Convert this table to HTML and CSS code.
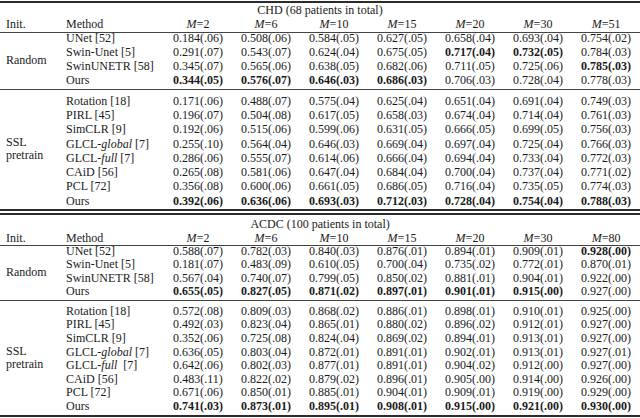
FILE: index.html
```html
<!DOCTYPE html>
<html>
<head>
<meta charset="utf-8">
<link rel="stylesheet" href="styles.css">
</head>
<body>
<table class="results chd">
<colgroup><col class="c-init"><col class="c-method"><col class="c-num"><col class="c-num"><col class="c-num"><col class="c-num"><col class="c-num"><col class="c-num"><col class="c-num"></colgroup>
<tbody>
<tr class="title"><td colspan="9">CHD (68 patients in total)</td></tr>
<tr class="head"><td class="init">Init.</td><td class="method">Method</td><td><i>M</i>=2</td><td><i>M</i>=6</td><td><i>M</i>=10</td><td><i>M</i>=15</td><td><i>M</i>=20</td><td><i>M</i>=30</td><td><i>M</i>=51</td></tr>
<tr class="first"><td class="init rnd" rowspan="4">Random</td><td class="method">UNet [52]</td><td>0.184(.06)</td><td>0.508(.06)</td><td>0.584(.05)</td><td>0.627(.05)</td><td>0.658(.04)</td><td>0.693(.04)</td><td>0.754(.02)</td></tr>
<tr><td class="method">Swin-Unet [5]</td><td>0.291(.07)</td><td>0.543(.07)</td><td>0.624(.04)</td><td>0.675(.05)</td><td class="b">0.717(.04)</td><td class="b">0.732(.05)</td><td>0.784(.03)</td></tr>
<tr><td class="method">SwinUNETR [58]</td><td>0.345(.07)</td><td>0.565(.06)</td><td>0.638(.05)</td><td>0.682(.06)</td><td>0.711(.05)</td><td>0.725(.06)</td><td class="b">0.785(.03)</td></tr>
<tr class="last"><td class="method">Ours</td><td class="b">0.344(.05)</td><td class="b">0.576(.07)</td><td class="b">0.646(.03)</td><td class="b">0.686(.03)</td><td>0.706(.03)</td><td>0.728(.04)</td><td>0.778(.03)</td></tr>
<tr class="gfirst"><td class="init ssl" rowspan="8">SSL<br>pretrain</td><td class="method">Rotation [18]</td><td>0.171(.06)</td><td>0.488(.07)</td><td>0.575(.04)</td><td>0.625(.04)</td><td>0.651(.04)</td><td>0.691(.04)</td><td>0.749(.03)</td></tr>
<tr><td class="method">PIRL [45]</td><td>0.196(.07)</td><td>0.504(.08)</td><td>0.617(.05)</td><td>0.658(.03)</td><td>0.674(.04)</td><td>0.714(.04)</td><td>0.761(.03)</td></tr>
<tr><td class="method">SimCLR [9]</td><td>0.192(.06)</td><td>0.515(.06)</td><td>0.599(.06)</td><td>0.631(.05)</td><td>0.666(.05)</td><td>0.699(.05)</td><td>0.756(.03)</td></tr>
<tr><td class="method">GLCL-<i>global</i> [7]</td><td>0.255(.10)</td><td>0.564(.04)</td><td>0.646(.03)</td><td>0.669(.04)</td><td>0.697(.04)</td><td>0.725(.04)</td><td>0.766(.03)</td></tr>
<tr><td class="method">GLCL-<i>full</i> [7]</td><td>0.286(.06)</td><td>0.555(.07)</td><td>0.614(.06)</td><td>0.666(.04)</td><td>0.694(.04)</td><td>0.733(.04)</td><td>0.772(.03)</td></tr>
<tr><td class="method">CAiD [56]</td><td>0.265(.08)</td><td>0.581(.06)</td><td>0.647(.04)</td><td>0.684(.04)</td><td>0.700(.04)</td><td>0.737(.04)</td><td>0.771(.02)</td></tr>
<tr><td class="method">PCL [72]</td><td>0.356(.08)</td><td>0.600(.06)</td><td>0.661(.05)</td><td>0.686(.05)</td><td>0.716(.04)</td><td>0.735(.05)</td><td>0.774(.03)</td></tr>
<tr class="end"><td class="method">Ours</td><td class="b">0.392(.06)</td><td class="b">0.636(.06)</td><td class="b">0.693(.03)</td><td class="b">0.712(.03)</td><td class="b">0.728(.04)</td><td class="b">0.754(.04)</td><td class="b">0.788(.03)</td></tr>
</tbody>
</table>
<table class="results acdc">
<colgroup><col class="c-init"><col class="c-method"><col class="c-num"><col class="c-num"><col class="c-num"><col class="c-num"><col class="c-num"><col class="c-num"><col class="c-num"></colgroup>
<tbody>
<tr class="title"><td colspan="9">ACDC (100 patients in total)</td></tr>
<tr class="head"><td class="init">Init.</td><td class="method">Method</td><td><i>M</i>=2</td><td><i>M</i>=6</td><td><i>M</i>=10</td><td><i>M</i>=15</td><td><i>M</i>=20</td><td><i>M</i>=30</td><td><i>M</i>=80</td></tr>
<tr class="first"><td class="init rnd" rowspan="4">Random</td><td class="method">UNet [52]</td><td>0.588(.07)</td><td>0.782(.03)</td><td>0.840(.03)</td><td>0.876(.01)</td><td>0.894(.01)</td><td>0.909(.01)</td><td class="b">0.928(.00)</td></tr>
<tr><td class="method">Swin-Unet [5]</td><td>0.181(.07)</td><td>0.483(.09)</td><td>0.610(.05)</td><td>0.700(.04)</td><td>0.735(.02)</td><td>0.772(.01)</td><td>0.870(.01)</td></tr>
<tr><td class="method">SwinUNETR [58]</td><td>0.567(.04)</td><td>0.740(.07)</td><td>0.799(.05)</td><td>0.850(.02)</td><td>0.881(.01)</td><td>0.904(.01)</td><td>0.922(.00)</td></tr>
<tr class="last"><td class="method">Ours</td><td class="b">0.655(.05)</td><td class="b">0.827(.05)</td><td class="b">0.871(.02)</td><td class="b">0.897(.01)</td><td class="b">0.901(.01)</td><td class="b">0.915(.00)</td><td>0.927(.00)</td></tr>
<tr class="gfirst"><td class="init ssl" rowspan="8">SSL<br>pretrain</td><td class="method">Rotation [18]</td><td>0.572(.08)</td><td>0.809(.03)</td><td>0.868(.02)</td><td>0.886(.01)</td><td>0.898(.01)</td><td>0.910(.01)</td><td>0.925(.00)</td></tr>
<tr><td class="method">PIRL [45]</td><td>0.492(.03)</td><td>0.823(.04)</td><td>0.865(.01)</td><td>0.880(.02)</td><td>0.896(.02)</td><td>0.912(.01)</td><td>0.927(.00)</td></tr>
<tr><td class="method">SimCLR [9]</td><td>0.352(.06)</td><td>0.725(.08)</td><td>0.824(.04)</td><td>0.869(.02)</td><td>0.894(.01)</td><td>0.913(.01)</td><td>0.927(.00)</td></tr>
<tr><td class="method">GLCL-<i>global</i> [7]</td><td>0.636(.05)</td><td>0.803(.04)</td><td>0.872(.01)</td><td>0.891(.01)</td><td>0.902(.01)</td><td>0.913(.01)</td><td>0.927(.01)</td></tr>
<tr><td class="method">GLCL-<i>full</i>&nbsp; [7]</td><td>0.642(.06)</td><td>0.802(.03)</td><td>0.877(.01)</td><td>0.891(.01)</td><td>0.904(.02)</td><td>0.912(.00)</td><td>0.927(.00)</td></tr>
<tr><td class="method">CAiD [56]</td><td>0.483(.11)</td><td>0.822(.02)</td><td>0.879(.02)</td><td>0.896(.01)</td><td>0.905(.00)</td><td>0.914(.00)</td><td>0.926(.00)</td></tr>
<tr><td class="method">PCL [72]</td><td>0.671(.06)</td><td>0.850(.01)</td><td>0.885(.01)</td><td>0.904(.01)</td><td>0.909(.01)</td><td>0.919(.00)</td><td>0.929(.00)</td></tr>
<tr class="end"><td class="method">Ours</td><td class="b">0.741(.03)</td><td class="b">0.873(.01)</td><td class="b">0.895(.01)</td><td class="b">0.908(.01)</td><td class="b">0.915(.00)</td><td class="b">0.921(.00)</td><td class="b">0.930(.00)</td></tr>
</tbody>
</table>
</body>
</html>
```

FILE: styles.css
```css
html, body {
  margin: 0;
  padding: 0;
  background: #ffffff;
}

body {
  font-family: "Liberation Serif", "Times New Roman", serif;
  font-size: 12px;
  color: #1a1a1a;
}

.results {
  width: 640px;
  table-layout: fixed;
  border-collapse: separate;
  border-spacing: 0;
  border-top: 2px solid #2b2b2b;
  border-bottom: 2px solid #2b2b2b;
}

.results.chd {
  margin-top: 1px;
  --lh: 14.3px;
  --title-pad: 0px;
  --first-lh: 10.7px;
  --first-pad: 1.5px;
}

.results.acdc {
  margin-top: 1.5px;
  --lh: 13.6px;
  --title-pad: 3.5px;
  --first-lh: 10px;
  --first-pad: 1.8px;
}

.c-init { width: 62px; }
.c-method { width: 102px; }
.c-num { width: 68px; }

.results td {
  padding: 0;
  line-height: var(--lh);
  text-align: center;
  white-space: nowrap;
  vertical-align: baseline;
}

.results td.init {
  text-align: left;
  padding-left: 6px;
  vertical-align: middle;
}

.results td.method {
  text-align: left;
  padding-left: 4px;
}

.results td.ssl {
  line-height: 13px;
}

.results td.b {
  font-weight: bold;
}

.results tr.title td {
  padding-top: var(--title-pad);
  padding-left: 0;
}

.results tr.head td {
  border-bottom: 1px solid #444;
}

.results tr.head td.init {
  vertical-align: baseline;
}

.results tr.first td {
  line-height: var(--first-lh);
  padding-bottom: var(--first-pad);
}

.results tr.first td.rnd {
  line-height: var(--lh);
  padding-bottom: 0;
  border-bottom: 1px solid #444;
}

.results tr.last td {
  padding-bottom: 1px;
  border-bottom: 1px solid #444;
}

.results tr.gfirst td {
  padding-top: 4px;
}

.results tr.gfirst td.ssl {
  padding-top: 0;
}

.results tr.end td {
  padding-bottom: 1px;
}
```
